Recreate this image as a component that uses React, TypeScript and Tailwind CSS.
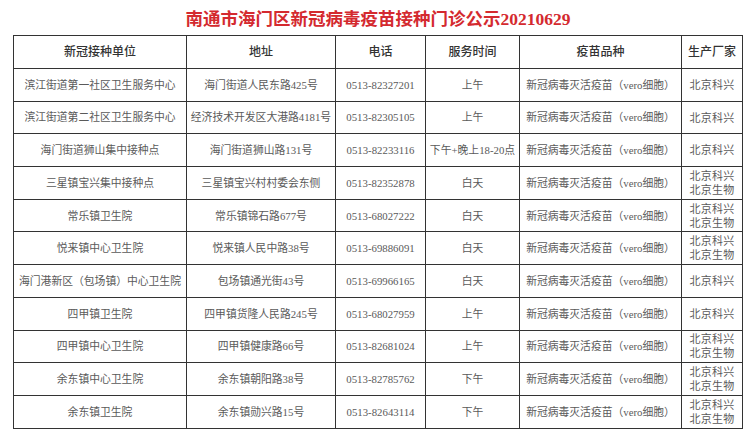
import React from 'react';

interface Row {
  unit: string;
  address: string;
  phone: string;
  time: string;
  makers: string[];
}

const vaccine = '新冠病毒灭活疫苗（vero细胞）';

const rows: Row[] = [
  { unit: '滨江街道第一社区卫生服务中心', address: '海门街道人民东路425号', phone: '0513-82327201', time: '上午', makers: ['北京科兴'] },
  { unit: '滨江街道第二社区卫生服务中心', address: '经济技术开发区大港路4181号', phone: '0513-82305105', time: '上午', makers: ['北京科兴'] },
  { unit: '海门街道狮山集中接种点', address: '海门街道狮山路131号', phone: '0513-82233116', time: '下午+晚上18-20点', makers: ['北京科兴'] },
  { unit: '三星镇宝兴集中接种点', address: '三星镇宝兴村村委会东侧', phone: '0513-82352878', time: '白天', makers: ['北京科兴', '北京生物'] },
  { unit: '常乐镇卫生院', address: '常乐镇锦石路677号', phone: '0513-68027222', time: '白天', makers: ['北京科兴', '北京生物'] },
  { unit: '悦来镇中心卫生院', address: '悦来镇人民中路38号', phone: '0513-69886091', time: '白天', makers: ['北京科兴', '北京生物'] },
  { unit: '海门港新区（包场镇）中心卫生院', address: '包场镇通光街43号', phone: '0513-69966165', time: '白天', makers: ['北京科兴'] },
  { unit: '四甲镇卫生院', address: '四甲镇货隆人民路245号', phone: '0513-68027959', time: '上午', makers: ['北京科兴'] },
  { unit: '四甲镇中心卫生院', address: '四甲镇健康路66号', phone: '0513-82681024', time: '上午', makers: ['北京科兴', '北京生物'] },
  { unit: '余东镇中心卫生院', address: '余东镇朝阳路38号', phone: '0513-82785762', time: '下午', makers: ['北京科兴', '北京生物'] },
  { unit: '余东镇卫生院', address: '余东镇勋兴路15号', phone: '0513-82643114', time: '下午', makers: ['北京科兴', '北京生物'] },
];

const headers = ['新冠接种单位', '地址', '电话', '服务时间', '疫苗品种', '生产厂家'];
const widths = ['w-[173px]', 'w-[149px]', 'w-[90px]', 'w-[94px]', 'w-[162px]', 'w-[61px]'];

const cell = 'border-[1.5px] border-[#333] text-center align-middle p-0 whitespace-nowrap';

export default function App() {
  return (
    <div
      className="w-[756px] h-[437px] bg-white overflow-hidden"
      style={{ fontFamily: '"Liberation Serif", "Noto Sans CJK SC", serif' }}
    >
      <h1 className="h-[35px] pt-[8px] text-center text-[17.5px] leading-[22px] font-bold text-[#d42a2f]">
        南通市海门区新冠病毒疫苗接种门诊公示20210629
      </h1>
      <table className="ml-[13px] w-[729px] table-fixed border-collapse">
        <colgroup>
          {widths.map((w, i) => (
            <col key={i} className={w} />
          ))}
        </colgroup>
        <thead>
          <tr className="h-[33px]">
            {headers.map((h) => (
              <th key={h} className={`${cell} text-[12px] font-medium text-[#333]`}>
                {h}
              </th>
            ))}
          </tr>
        </thead>
        <tbody className="text-[10.8px] text-[#5a5a5a]">
          {rows.map((r) => (
            <tr key={r.unit} className="h-[32.7px]">
              <td className={cell}>{r.unit}</td>
              <td className={cell}>{r.address}</td>
              <td className={cell}>{r.phone}</td>
              <td className={cell}>{r.time}</td>
              <td className={cell}>{vaccine}</td>
              <td className={`${cell} text-[11px] leading-[14px] tracking-[0.3px]`}>
                {r.makers.map((m) => (
                  <div key={m}>{m}</div>
                ))}
              </td>
            </tr>
          ))}
        </tbody>
      </table>
    </div>
  );
}
